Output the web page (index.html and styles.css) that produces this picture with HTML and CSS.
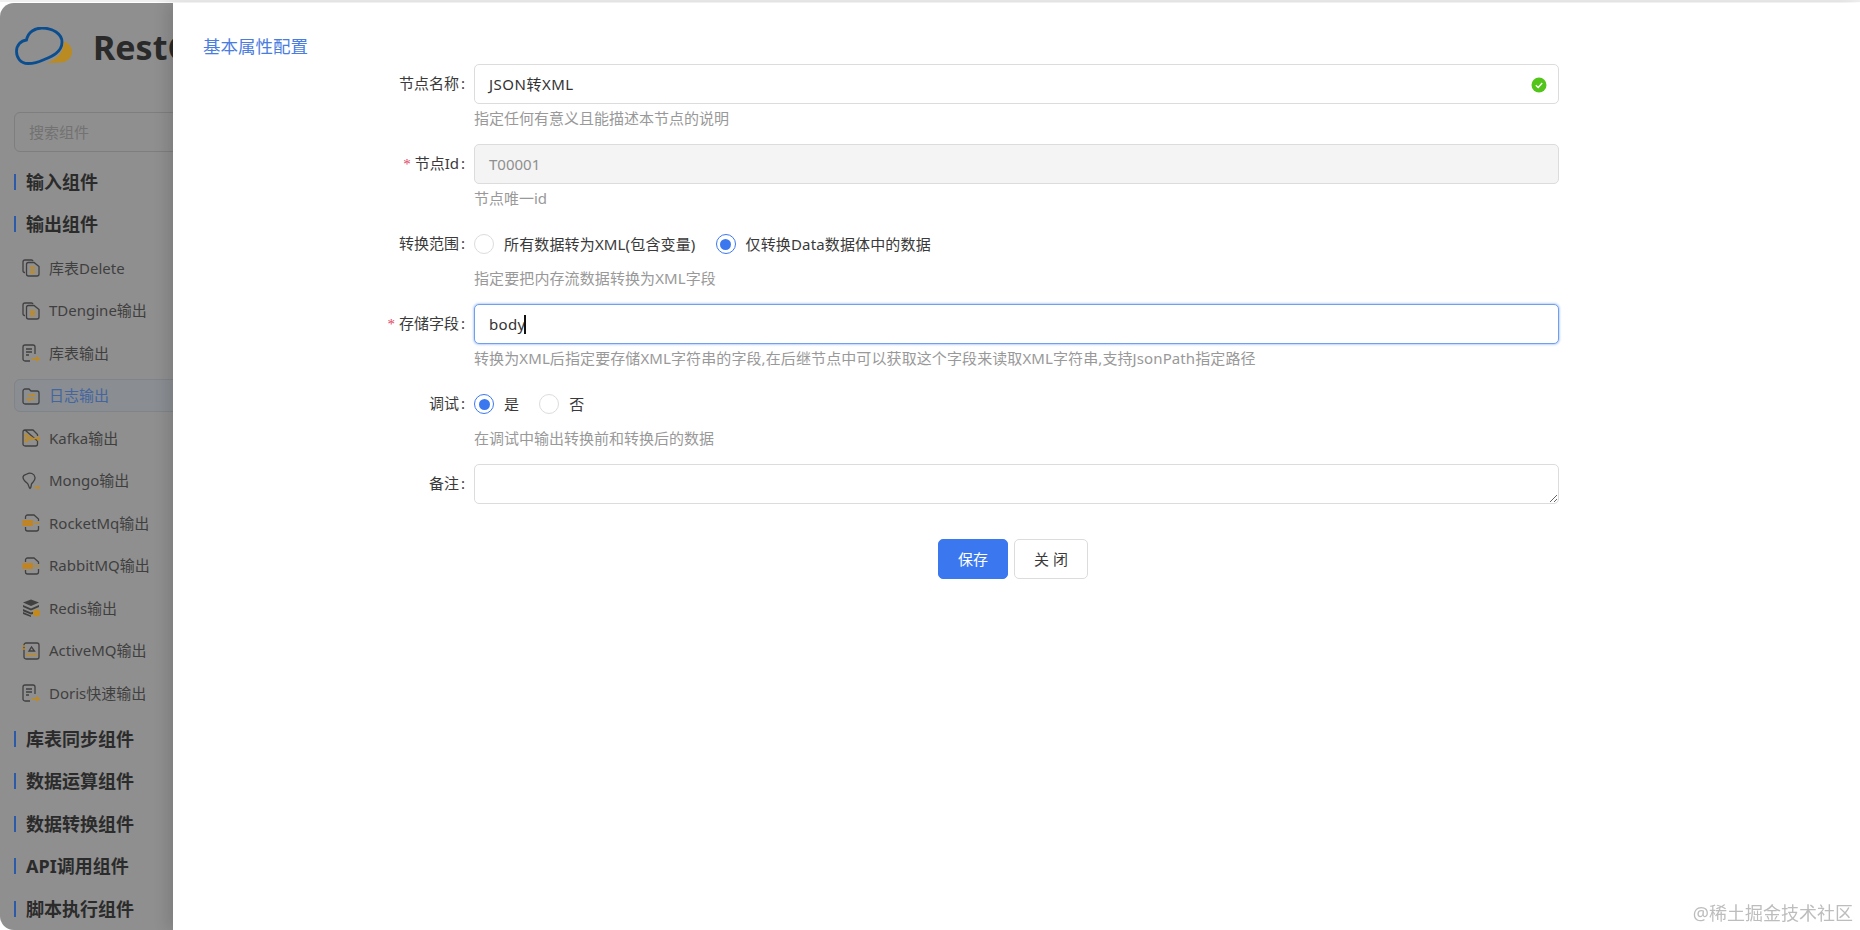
FILE: index.html
```html
<!DOCTYPE html>
<html lang="zh-CN">
<head>
<meta charset="utf-8">
<title>基本属性配置</title>
<link rel="stylesheet" href="styles.css">
</head>
<body>
<svg class="defs" aria-hidden="true">
  <symbol id="i-copy" viewBox="0 0 18 18">
    <path class="s" d="M3 13.500 H2.600 A1.600 1.600 0 0 1 1 11.900 V3 A2 2 0 0 1 3 1 H9.500 A1.600 1.600 0 0 1 11 2.200"/>
    <path class="s" d="M6.500 3.500 H12 L17 7.500 V15 A2 2 0 0 1 15 17 H6.500 A2 2 0 0 1 4.500 15 V5.500 A2 2 0 0 1 6.500 3.500 Z"/>
    <path class="o" d="M8 8.500 H13 M8 11 H13 M8 13.500 H13"/>
  </symbol>
  <symbol id="i-list" viewBox="0 0 18 18">
    <path class="s" d="M8 17 H3 A2 2 0 0 1 1 15 V3 A2 2 0 0 1 3 1 H11 A2 2 0 0 1 13 3 V10"/>
    <path class="s" d="M4 5 H10 M4 8 H10 M4 11 H7"/>
    <path class="o" d="M9.500 15 H17 M14.500 12.500 L17 15 L14.500 17"/>
  </symbol>
  <symbol id="i-folder" viewBox="0 0 18 18">
    <path class="s" d="M1 4 A2 2 0 0 1 3 2 H7 L9 4 H15 A2 2 0 0 1 17 6 V15 A2 2 0 0 1 15 17 H3 A2 2 0 0 1 1 15 Z"/>
    <path class="o" d="M5.500 8.500 H12.500 L10.500 7 M12.500 12.500 H5.500 L7.500 14"/>
  </symbol>
  <symbol id="i-kafka" viewBox="0 0 18 18">
    <path class="s" d="M3 1 H11 L15.500 5.500 V7 M15.500 12 V15 A2 2 0 0 1 13.500 17 H3 A2 2 0 0 1 1 15 V3 A2 2 0 0 1 3 1 Z"/>
    <circle class="o" cx="4.500" cy="6.500" r="1.300"/><circle class="o" cx="4.500" cy="11.500" r="1.300"/><circle class="o" cx="9" cy="9.500" r="1.300"/>
    <path class="o" d="M5.500 7 L8 8.500 M5.500 11 L8 10 M10.500 9.500 H17.500 M15.500 7.500 L17.500 9.500 L15.500 11.500"/>
  </symbol>
  <symbol id="i-mongo" viewBox="0 0 18 18">
    <path class="s" d="M1 5 C1.500 2.500 3.500 3 5 2 C8 0 12.500 1.500 13 5.500 C13.500 9 10.500 10 9.500 12 C9 13.500 9.500 15.500 8 16.500 C6.500 15.500 7 12.500 5 11 C3 9.500 1 8 1 5 Z"/>
    <path class="o" d="M12.500 15.500 H17 M15.500 14 L17 15.500 L15.500 17"/>
  </symbol>
  <symbol id="i-mq" viewBox="0 0 18 18">
    <path class="s" d="M3.500 5 V3 A2 2 0 0 1 5.500 1 H12 L16.500 5 V7 M16.500 12 V15 A2 2 0 0 1 14.500 17 H5.500 A2 2 0 0 1 3.500 15 V13"/>
    <path class="b" d="M0.500 7.500 H11 M0.500 10.500 H11"/>
    <path class="o" d="M12.500 9 H17.500"/>
  </symbol>
  <symbol id="i-redis" viewBox="0 0 18 18">
    <path class="f" d="M9 0.500 L17 3.500 L9 7 L1 3.500 Z M1 6 L9 9.500 L17 6 V8 L9 11.500 L1 8 Z M1 10 L9 13.500 L11 12.700 V15 L9 15.500 L1 12.200 Z M1 13 L9 16.500 V18 L1 15 Z"/>
    <circle class="of" cx="14.500" cy="14" r="3.500"/>
  </symbol>
  <symbol id="i-active" viewBox="0 0 18 18">
    <rect class="s" x="2" y="1" width="15" height="16" rx="2"/>
    <path class="o" d="M0.500 4 H3 M0.500 7 H3 M4 12.500 H15"/>
    <path class="s" d="M7 9 L9.500 5 L12.500 9 Z"/>
  </symbol>
</svg>

<div class="page">
  <aside class="sidebar">
    <header class="brand">
      <svg class="logo" viewBox="0 0 58 40" aria-hidden="true">
        <path class="logo-sun" d="M49.500 14.500 C55 16 58 20 58 25 C58 31 53 35 47 35.500 L33 36 C40 33 50 28 49.500 14.500 Z"/>
        <path class="logo-cloud" d="M14 36.500 C6 36.500 2.500 30 2.500 24.500 C2.500 18 7 13.500 12.500 13 C14 5 21 1 28 1 C39 1 48 7 48 15 C48 26 36 30 29 33 C24 35.500 19 36.500 14 36.500 Z"/>
      </svg>
      <span class="brand-name">RestCloud</span>
    </header>
    <div class="search">搜索组件</div>
    <nav class="nav">
      <div class="group">输入组件</div>
      <div class="group">输出组件</div>
      <ul class="items">
        <li class="item"><svg class="ico"><use href="#i-copy"/></svg>库表Delete</li>
        <li class="item"><svg class="ico"><use href="#i-copy"/></svg>TDengine输出</li>
        <li class="item"><svg class="ico"><use href="#i-list"/></svg>库表输出</li>
        <li class="item active"><svg class="ico"><use href="#i-folder"/></svg>日志输出</li>
        <li class="item"><svg class="ico"><use href="#i-kafka"/></svg>Kafka输出</li>
        <li class="item"><svg class="ico"><use href="#i-mongo"/></svg>Mongo输出</li>
        <li class="item"><svg class="ico"><use href="#i-mq"/></svg>RocketMq输出</li>
        <li class="item"><svg class="ico"><use href="#i-mq"/></svg>RabbitMQ输出</li>
        <li class="item"><svg class="ico"><use href="#i-redis"/></svg>Redis输出</li>
        <li class="item"><svg class="ico"><use href="#i-active"/></svg>ActiveMQ输出</li>
        <li class="item"><svg class="ico"><use href="#i-list"/></svg>Doris快速输出</li>
      </ul>
      <div class="group">库表同步组件</div>
      <div class="group">数据运算组件</div>
      <div class="group">数据转换组件</div>
      <div class="group">API调用组件</div>
      <div class="group">脚本执行组件</div>
    </nav>
  </aside>

  <main class="drawer">
    <h2 class="title">基本属性配置</h2>
    <form class="form">
      <div class="row">
        <div class="label">节点名称<span class="colon">:</span></div>
        <div class="control">
          <div class="field">JSON转XML
            <svg class="ok" viewBox="0 0 16 16" aria-hidden="true"><circle cx="8" cy="8" r="7.500"/><path d="M4.800 8.200 L7.200 10.500 L11.200 6"/></svg>
          </div>
          <div class="help">指定任何有意义且能描述本节点的说明</div>
        </div>
      </div>
      <div class="row">
        <div class="label"><span class="req">*</span>节点Id<span class="colon">:</span></div>
        <div class="control">
          <div class="field disabled">T00001</div>
          <div class="help">节点唯一id</div>
        </div>
      </div>
      <div class="row">
        <div class="label">转换范围<span class="colon">:</span></div>
        <div class="control">
          <div class="radios">
            <span class="radio"><i class="dot"></i>所有数据转为XML(包含变量)</span>
            <span class="radio on"><i class="dot"></i>仅转换Data数据体中的数据</span>
          </div>
          <div class="help wide">指定要把内存流数据转换为XML字段</div>
        </div>
      </div>
      <div class="row">
        <div class="label"><span class="req">*</span>存储字段<span class="colon">:</span></div>
        <div class="control">
          <div class="field focus">body<i class="caret"></i></div>
          <div class="help wide">转换为XML后指定要存储XML字符串的字段,在后继节点中可以获取这个字段来读取XML字符串,支持JsonPath指定路径</div>
        </div>
      </div>
      <div class="row">
        <div class="label">调试<span class="colon">:</span></div>
        <div class="control">
          <div class="radios">
            <span class="radio on"><i class="dot"></i>是</span>
            <span class="radio"><i class="dot"></i>否</span>
          </div>
          <div class="help">在调试中输出转换前和转换后的数据</div>
        </div>
      </div>
      <div class="row last">
        <div class="label">备注<span class="colon">:</span></div>
        <div class="control">
          <textarea class="memo"></textarea>
        </div>
      </div>
      <div class="actions">
        <button type="button" class="btn primary">保存</button>
        <button type="button" class="btn">关 闭</button>
      </div>
    </form>
  </main>
</div>
<div class="watermark">@稀土掘金技术社区</div>
</body>
</html>
```

FILE: styles.css
```css
* { box-sizing: border-box; }
html, body { margin: 0; height: 100%; }
body {
  background: #fff;
  color: #333;
  font: 15px/1.5 "Noto Sans", "Noto Sans CJK SC", sans-serif;
  overflow: hidden;
}
.defs { display: none; }

.page {
  display: flex;
  height: 930px;
  padding-top: 1px;
  border-top: 2px solid #f0f0f0;
}

/* dimmed side panel */
.sidebar {
  flex: 0 0 173px;
  width: 173px;
  overflow: hidden;
  background: #8f8f8f;
  border-radius: 14px 0 0 14px;
  color: #3f3f3f;
}
.brand {
  display: flex;
  align-items: center;
  height: 86px;
  padding: 2px 0 0 14px;
  white-space: nowrap;
}
.logo { width: 58px; height: 40px; flex: none; }
.logo-cloud { fill: none; stroke: #0b4e90; stroke-width: 2.800; }
.logo-sun { fill: #b98b22; }
.brand-name {
  margin-left: 21px;
  font-size: 34px;
  font-weight: 700;
  line-height: 40px;
  color: #2a2a2a;
}
.search {
  width: 200px;
  height: 40px;
  margin: 23px 0 0 14px;
  padding: 0 14px;
  line-height: 38px;
  color: #727272;
  border: 1px solid #7e7e7e;
  border-radius: 6px;
  white-space: nowrap;
}
.nav { margin-top: 8.750px; }
.group {
  position: relative;
  height: 42.500px;
  padding-left: 26px;
  font-size: 18px;
  font-weight: 700;
  line-height: 42.500px;
  color: #2b2b2b;
  white-space: nowrap;
}
.group::before {
  content: "";
  position: absolute;
  left: 14px;
  top: 13px;
  width: 2px;
  height: 16px;
  background: #2a5aa8;
}
.items { list-style: none; margin: 0; padding: 5.750px 0 8px; }
.item {
  display: flex;
  align-items: center;
  width: 200px;
  height: 33px;
  margin: 0 0 9.500px 14px;
  padding-left: 8px;
  border: 1px solid transparent;
  border-radius: 6px;
  white-space: nowrap;
}
.item:last-child { margin-bottom: 0; }
.item.active {
  background: #8a8e92;
  border-color: #7f8488;
  color: #44659f;
}
.ico { flex: none; width: 18px; height: 18px; margin-right: 9px; margin-left: -1px; }
.s { fill: none; stroke: #404040; stroke-width: 1.300; }
.o { fill: none; stroke: #c28a1c; stroke-width: 1.300; }
.b { fill: none; stroke: #c9830f; stroke-width: 2.600; }
.f { fill: #404040; }
.of { fill: #c28a1c; }

/* drawer */
.drawer {
  position: relative;
  flex: 1;
  min-width: 0;
  background: #fff;
  padding: 31px 0 0 30px;
  box-shadow: -6px 0 14px rgba(0, 0, 0, .12);
}
.title {
  margin: 0;
  font-size: 17.500px;
  font-weight: 400;
  line-height: 24px;
  color: #4a7de0;
}
.form { margin-top: 6px; }
.row {
  display: grid;
  grid-template-columns: 262px 1085px;
  column-gap: 9px;
  height: 80px;
}
.row.last { height: 40px; }
.label {
  height: 40px;
  line-height: 38px;
  text-align: right;
  color: #3a3a3a;
}
.colon { margin-left: 2px; }
.req {
  margin-right: 4px;
  color: #e0455f;
  font-family: "Liberation Serif", serif;
}
.field {
  position: relative;
  display: flex;
  align-items: center;
  height: 40px;
  padding: 0 14px;
  color: #333;
  background: #fff;
  border: 1px solid #dcdcdc;
  border-radius: 5px;
  letter-spacing: .5px;
}
.field.disabled { background: #f4f4f4; color: #8f8f8f; letter-spacing: 0; }
.field.focus {
  border-color: #6f9fee;
  box-shadow: 0 0 2px 1px rgba(70, 130, 235, .35);
  letter-spacing: .3px;
}
.caret { width: 2px; height: 19px; margin-left: -1px; background: #111; }
.ok {
  position: absolute;
  right: 11px;
  top: 11.500px;
  width: 16px;
  height: 16px;
}
.ok circle { fill: #52c41a; }
.ok path { fill: none; stroke: #fff; stroke-width: 1.400; }
.help {
  height: 30px;
  line-height: 28px;
  color: #999;
  white-space: nowrap;
}
.help.wide { letter-spacing: .1px; }
.radios { display: flex; align-items: center; height: 40px; gap: 20px; letter-spacing: .15px; }
.radio { display: inline-flex; align-items: center; color: #3a3a3a; }
.dot {
  position: relative;
  width: 20px;
  height: 20px;
  margin-right: 10px;
  background: #fff;
  border: 1px solid #dcdcdc;
  border-radius: 50%;
}
.radio.on .dot { border-color: #3b78f0; }
.radio.on .dot::after {
  content: "";
  position: absolute;
  inset: 3.500px;
  border-radius: 50%;
  background: #3b78f0;
}
.memo {
  display: block;
  width: 100%;
  height: 40px;
  min-height: 40px;
  border: 1px solid #dcdcdc;
  border-radius: 5px;
  outline: none;
  padding: 4px 13px;
  font: inherit;
}
.actions {
  display: flex;
  gap: 6px;
  margin: 35px 0 0 735px;
}
.btn {
  width: 74px;
  height: 40px;
  padding: 0;
  font: inherit;
  color: #3a3a3a;
  background: #fff;
  border: 1px solid #dcdcdc;
  border-radius: 5px;
}
.btn.primary {
  width: 70px;
  color: #fff;
  background: #3b78f0;
  border-color: #3b78f0;
}
.watermark {
  position: fixed;
  right: 7px;
  bottom: 4px;
  font-size: 18px;
  line-height: 26px;
  color: #bdbdbd;
}
```
